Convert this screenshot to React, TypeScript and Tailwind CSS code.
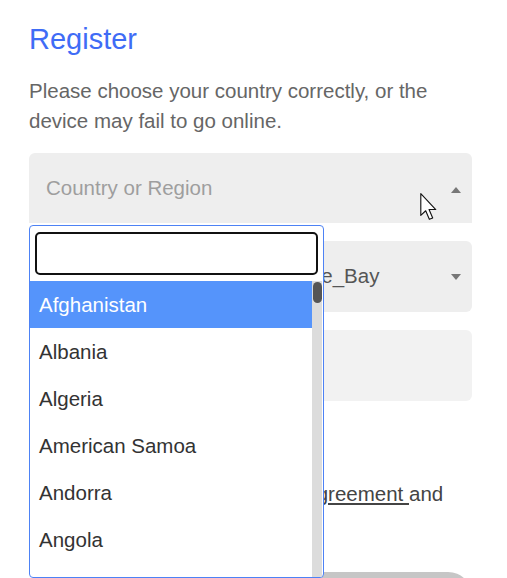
import { useState } from "react";

const countries = ["Afghanistan", "Albania", "Algeria", "American Samoa", "Andorra", "Angola", "Anguilla", "Antarctica"];

export default function App() {
  const [active] = useState(0);

  return (
    <div className="relative w-[507px] h-[578px] overflow-hidden bg-white font-['Liberation_Sans',Arial,sans-serif]">
      <div className="w-[443px] ml-[29px] pt-[25px]">
        {/* Title */}
        <h1 className="text-[29px] leading-[29px] text-[#3f6cf6]">Register</h1>

        {/* Hint */}
        <p className="mt-[22px] text-[20.5px] leading-[30px] text-[#666666]">
          Please choose your country correctly, or the device may fail to go online.
        </p>

        {/* Country or Region (open) */}
        <div className="mt-[17px] h-[70px] bg-[#eeeeee] rounded-t-[6px] flex items-center justify-between pl-[17px] pr-[11px]">
          <span className="text-[20.5px] text-[#9e9e9e]">Country or Region</span>
          <svg width="10" height="6" viewBox="0 0 10 6" className="mb-[-3px]">
            <path d="M0 6 L5 0 L10 6 Z" fill="#777777" />
          </svg>
        </div>

        {/* Time zone */}
        <div className="mt-[18px] h-[71px] bg-[#eeeeee] rounded-[6px] flex items-center justify-between pl-[17px] pr-[11px]">
          <span className="text-[20.5px] text-[#555555] whitespace-nowrap">(UTC-4:00) ADT America/Glace_Bay</span>
          <svg width="10" height="6" viewBox="0 0 10 6" className="shrink-0">
            <path d="M0 0 L5 6 L10 0 Z" fill="#777777" />
          </svg>
        </div>

        {/* Third field */}
        <div className="mt-[18px] h-[71px] bg-[#f2f2f2] rounded-[6px]" />

        {/* Agreement */}
        <div className="mt-[78px] flex text-[20.5px] leading-[30px] text-[#444444]">
          <span className="mt-[8px] w-[13px] h-[13px] shrink-0 border border-[#999] rounded-[3px]" />
          <p>
            I have read and agree to the <span className="underline">agreement </span>and{" "}
            <span className="underline">Privacy Policy</span>
          </p>
        </div>

        {/* Submit */}
        <div className="mt-[33px] h-[48px] rounded-full bg-[#c6c6c6]" />
      </div>

      {/* Dropdown menu */}
      <div className="absolute left-[29px] top-[225px] w-[295px] h-[353px] bg-white border border-[#4d82f5] rounded-[4px] flex flex-col overflow-hidden">
        <div className="px-[5px] pt-[6px] pb-[6px]">
          <div className="h-[43px] border-2 border-[#111111] rounded-[5px] bg-white" />
        </div>
        <div className="flex flex-1 min-h-0">
          <ul className="flex-1 overflow-hidden">
            {countries.map((c, i) => (
              <li
                key={c}
                className={`h-[47px] flex items-center pl-[9px] pt-[2px] text-[20.5px] ${
                  i === active ? "bg-[#5594fb] text-white" : "text-[#333333]"
                }`}
              >
                {c}
              </li>
            ))}
          </ul>
          <div className="w-[10px] bg-[#dcdcdc] pt-[1px] flex justify-center">
            <div className="w-[9px] h-[21px] rounded-full bg-[#555555]" />
          </div>
          <div className="w-[1px]" />
        </div>
      </div>

      {/* Mouse pointer */}
      <svg className="absolute left-[420px] top-[193px]" width="17" height="28" viewBox="0 0 12 20">
        <path d="M0.5 0.5 L0.5 16 L4 12.7 L6.6 18.8 L9 17.8 L6.4 11.8 L11.2 11.8 Z" fill="white" stroke="#111" strokeWidth="0.8" strokeLinejoin="round" />
      </svg>
    </div>
  );
}
